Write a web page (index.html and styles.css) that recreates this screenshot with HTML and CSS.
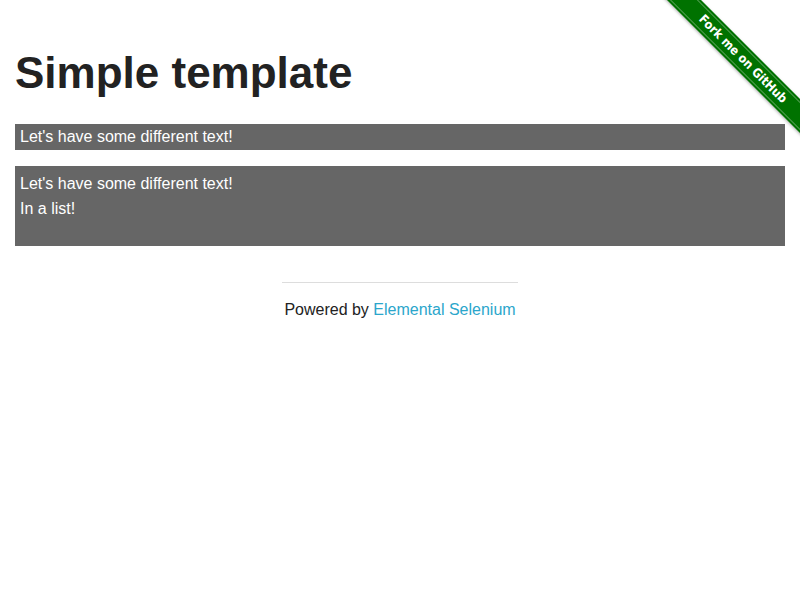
FILE: index.html
```html
<!DOCTYPE html>
<html>
<head>
<meta charset="utf-8">
<link rel="stylesheet" href="styles.css">
</head>
<body>
<div class="ribbon-wrap"><a class="ribbon" href="#">Fork me on GitHub</a></div>
<div class="page">
  <h3 class="title">Simple template</h3>
  <div class="bar">Let's have some different text!</div>
  <ul class="bar-list">
    <li>Let's have some different text!</li>
    <li>In a list!</li>
  </ul>
  <div class="footer">
    <hr class="rule">
    <div class="powered">Powered by <a href="#">Elemental Selenium</a></div>
  </div>
</div>
</body>
</html>
```
FILE: styles.css
```css
html, body { margin: 0; padding: 0; background: #fff; }
body { font-family: "Liberation Sans", Arial, sans-serif; color: #222; font-size: 16px; }
.page { padding: 0 15px; }
.title { font-size: 44px; font-weight: bold; margin: 0; padding-top: 46px; line-height: 53px; color: #222; }
.bar { background: #666; color: #fff; height: 26px; line-height: 26px; padding: 0 5px; margin-top: 25px; }
.bar-list { list-style: none; margin: 16px 0 0; background: #666; color: #fff; padding: 5px 5px 25px; }
.bar-list li { line-height: 25px; }
.footer { width: 236px; margin: 36px auto 0; text-align: center; }
.rule { border: 0; border-top: 1px solid #ddd; margin: 0; height: 0; }
.powered { margin-top: 17px; line-height: 20px; }
.powered a { color: #2ba6cb; text-decoration: none; }
.ribbon-wrap { position: absolute; top: 0; right: 0; width: 149px; height: 149px; overflow: hidden; }
.ribbon { position: absolute; width: 240px; left: -28px; top: 49px; transform: rotate(45deg); background: #007200; color: #fff; text-decoration: none; font-family: "DejaVu Sans Condensed", "Liberation Sans", sans-serif; font-weight: bold; font-size: 12.5px; text-align: center; line-height: 18px; border-top: 1px solid rgba(255,255,255,0.3); border-bottom: 1px solid rgba(255,255,255,0.3); box-shadow: 0 0 0 2px #007200, 0 1px 3px 2px rgba(0,0,0,0.3); }
```
